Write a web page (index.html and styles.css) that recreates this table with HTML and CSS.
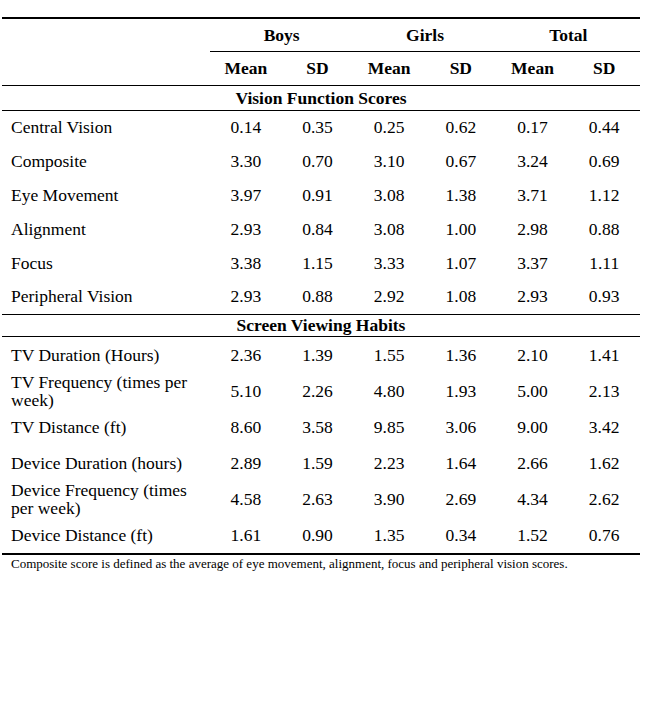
FILE: index.html
```html
<!DOCTYPE html>
<html>
<head>
<meta charset="utf-8">
<link rel="stylesheet" href="styles.css">
</head>
<body>
<table class="stats">
  <colgroup>
    <col class="c-label">
    <col class="c-num"><col class="c-num"><col class="c-num"><col class="c-num"><col class="c-num"><col class="c-num">
  </colgroup>
  <thead>
    <tr class="group-row">
      <th></th>
      <th colspan="2" class="group">Boys</th>
      <th colspan="2" class="group">Girls</th>
      <th colspan="2" class="group">Total</th>
    </tr>
    <tr class="sub-row">
      <th></th>
      <th>Mean</th><th>SD</th><th>Mean</th><th>SD</th><th>Mean</th><th>SD</th>
    </tr>
  </thead>
  <tbody>
    <tr class="section"><th colspan="7">Vision Function Scores</th></tr>
    <tr class="r1"><td class="label">Central Vision</td><td>0.14</td><td>0.35</td><td>0.25</td><td>0.62</td><td>0.17</td><td>0.44</td></tr>
    <tr class="r1"><td class="label">Composite</td><td>3.30</td><td>0.70</td><td>3.10</td><td>0.67</td><td>3.24</td><td>0.69</td></tr>
    <tr class="r1"><td class="label">Eye Movement</td><td>3.97</td><td>0.91</td><td>3.08</td><td>1.38</td><td>3.71</td><td>1.12</td></tr>
    <tr class="r1"><td class="label">Alignment</td><td>2.93</td><td>0.84</td><td>3.08</td><td>1.00</td><td>2.98</td><td>0.88</td></tr>
    <tr class="r1"><td class="label">Focus</td><td>3.38</td><td>1.15</td><td>3.33</td><td>1.07</td><td>3.37</td><td>1.11</td></tr>
    <tr class="r1"><td class="label">Peripheral Vision</td><td>2.93</td><td>0.88</td><td>2.92</td><td>1.08</td><td>2.93</td><td>0.93</td></tr>
    <tr class="section sec2"><th colspan="7">Screen Viewing Habits</th></tr>
    <tr class="r2"><td class="label">TV Duration (Hours)</td><td>2.36</td><td>1.39</td><td>1.55</td><td>1.36</td><td>2.10</td><td>1.41</td></tr>
    <tr class="r2"><td class="label">TV Frequency (times per week)</td><td>5.10</td><td>2.26</td><td>4.80</td><td>1.93</td><td>5.00</td><td>2.13</td></tr>
    <tr class="r2"><td class="label">TV Distance (ft)</td><td>8.60</td><td>3.58</td><td>9.85</td><td>3.06</td><td>9.00</td><td>3.42</td></tr>
    <tr class="r2"><td class="label">Device Duration (hours)</td><td>2.89</td><td>1.59</td><td>2.23</td><td>1.64</td><td>2.66</td><td>1.62</td></tr>
    <tr class="r2"><td class="label">Device Frequency (times per week)</td><td>4.58</td><td>2.63</td><td>3.90</td><td>2.69</td><td>4.34</td><td>2.62</td></tr>
    <tr class="r2 last"><td class="label">Device Distance (ft)</td><td>1.61</td><td>0.90</td><td>1.35</td><td>0.34</td><td>1.52</td><td>0.76</td></tr>
  </tbody>
</table>
<p class="note">Composite score is defined as the average of eye movement, alignment, focus and peripheral vision scores.</p>
</body>
</html>
```
FILE: styles.css
```css
html, body {
  margin: 0;
  padding: 0;
  background: #ffffff;
}
body {
  padding: 17px 0 0 2px;
  font-family: "Liberation Serif", "Times New Roman", serif;
  color: #000;
}
.stats {
  border-collapse: collapse;
  table-layout: fixed;
  width: 638px;
  border-top: 2px solid #000;
  border-bottom: 2px solid #000;
  font-size: 17.5px;
}
.c-label { width: 208px; }
.c-num { width: 71.67px; }
.stats th, .stats td {
  padding: 0;
  text-align: center;
  vertical-align: middle;
}
.stats th {
  font-weight: bold;
  font-size: 17.5px;
}
.group-row th { height: 32px; }
.group-row .group { border-bottom: 1px solid #000; }
.sub-row th { height: 33px; border-bottom: 1px solid #000; }
.section th { height: 24px; border-bottom: 1px solid #000; }
.sec2 th { height: 21px; border-top: 1px solid #000; }
.r1 td { height: 33.8px; }
.r2 td { height: 36px; line-height: 18px; }
.stats td.label {
  text-align: left;
  padding-left: 9px;
}
.note {
  margin: 1px 0 0 9px;
  font-size: 13px;
}
```
